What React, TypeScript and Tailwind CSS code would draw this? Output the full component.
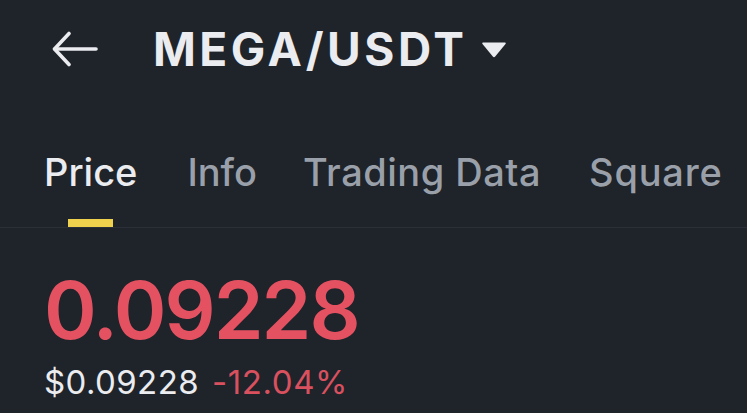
import React from 'react';

const tabs = ['Price', 'Info', 'Trading Data', 'Square'];
const tabGap = ['', 'ml-[50px]', 'ml-[46px]', 'ml-[48px]'];

const BackArrow: React.FC = () => (
  <svg width="46" height="36" viewBox="0 0 46 36" fill="none" className="shrink-0">
    <path d="M3 18H44" stroke="#eaecef" strokeWidth="3.6" strokeLinecap="round" />
    <path d="M17 2.5L2.5 18L17 33.5" stroke="#eaecef" strokeWidth="3.6" strokeLinecap="round" strokeLinejoin="round" />
  </svg>
);

const Caret: React.FC = () => (
  <svg width="26" height="17" viewBox="0 0 26 17" className="shrink-0">
    <path d="M2 1.5H24Q25.5 1.5 24.5 3L14.2 15.5Q13 16.8 11.8 15.5L1.5 3Q0.5 1.5 2 1.5Z" fill="#eaecef" />
  </svg>
);

export default function App() {
  return (
    <div
      className="w-[747px] h-[413px] overflow-hidden bg-[#1f232a] text-[#eaecef]"
      style={{ fontFamily: 'Inter, "Noto Sans", sans-serif' }}
    >
      {/* header */}
      <div className="h-[97px] flex items-center pl-[52px]">
        <BackArrow />
        <div className="ml-[55px] text-[46px] leading-none font-bold tracking-[3.5px]">MEGA/USDT</div>
        <div className="ml-[14px] mt-[1px]">
          <Caret />
        </div>
      </div>

      {/* tabs */}
      <div className="flex pl-[44px] pt-[56px] border-b border-[#2b3038]">
        {tabs.map((t, i) => (
          <div key={t} className={`flex flex-col items-center ${tabGap[i]}`}>
            <span
              className={`text-[38px] leading-none font-medium ${
                i === 0 ? 'text-[#eaecef]' : 'text-[#9aa0a9]'
              } ${i === 2 ? 'tracking-[0.5px]' : ''} ${i === 3 ? 'tracking-[0.8px]' : ''}`}
            >
              {t}
            </span>
            <div className={`mt-[28px] h-[8px] w-[45px] ${i === 0 ? 'bg-[#f0d14e]' : 'bg-transparent'}`} />
          </div>
        ))}
      </div>

      {/* price */}
      <div className="pl-[44px] pt-[42px]">
        <div className="text-[80px] leading-none font-semibold text-[#e45262] tracking-[-2px]">0.09228</div>
        <div className="mt-[16px] flex items-center gap-[13px] text-[33px] leading-none tracking-[0.4px]">
          <span className="text-[#eaecef]">$0.09228</span>
          <span className="text-[#d9505f] tracking-[0.6px]">-12.04%</span>
        </div>
      </div>
    </div>
  );
}
